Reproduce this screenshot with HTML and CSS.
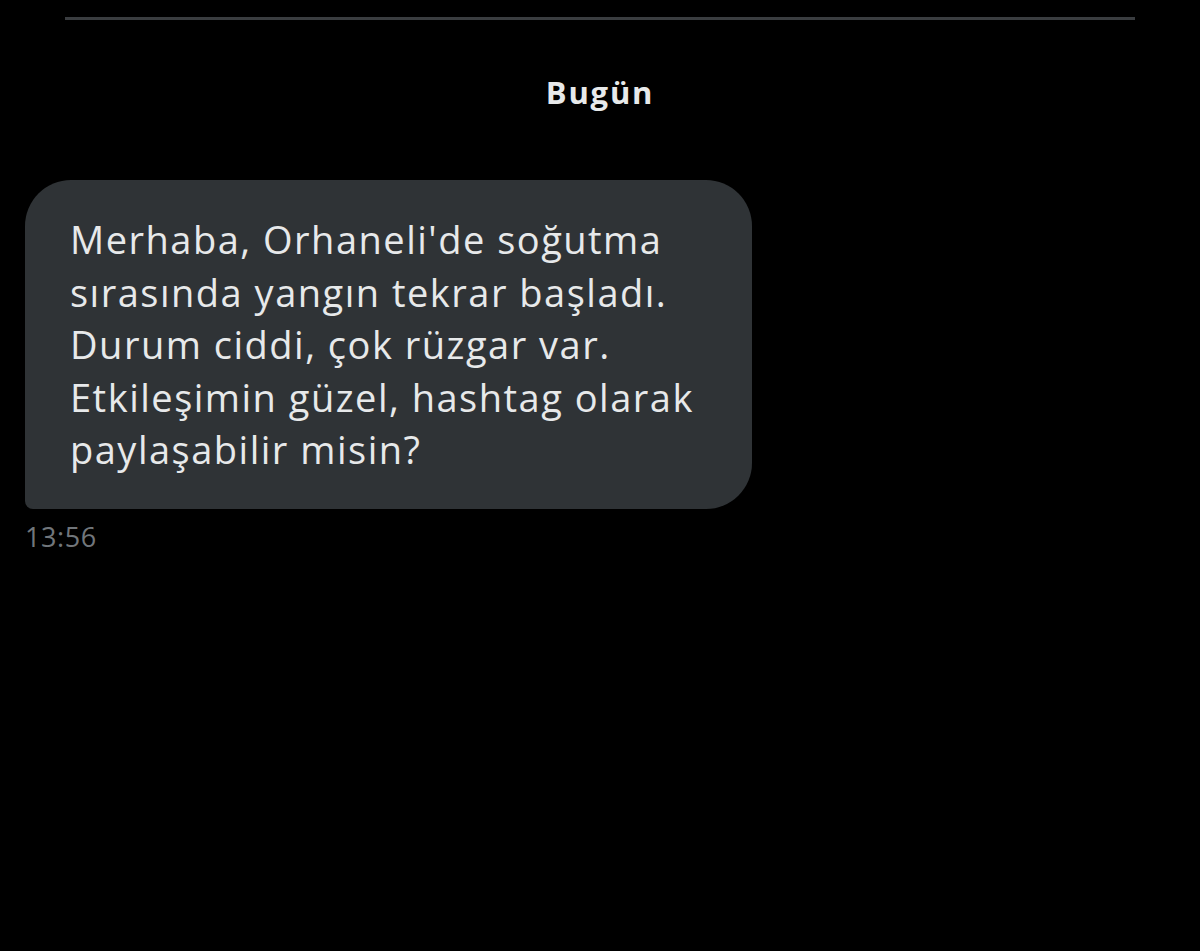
FILE: index.html
```html
<!DOCTYPE html>
<html lang="tr">
<head>
<meta charset="utf-8">
<link rel="stylesheet" href="styles.css">
</head>
<body>
<div class="screen">
  <div class="divider"></div>
  <div class="day">Bugün</div>
  <div class="message">
    <div class="bubble">Merhaba, Orhaneli'de soğutma<br>sırasında yangın tekrar başladı.<br>Durum ciddi, çok rüzgar var.<br>Etkileşimin güzel, hashtag olarak<br>paylaşabilir misin?</div>
    <div class="time">13:56</div>
  </div>
</div>
</body>
</html>
```
FILE: styles.css
```css
html, body {
  margin: 0;
  padding: 0;
  background: #000;
}
.screen {
  width: 1200px;
  height: 951px;
  background: #000;
  padding-top: 17px;
  box-sizing: border-box;
}
.divider {
  margin: 0 65px;
  height: 3px;
  background: #3a3d40;
}
.day {
  margin-top: 50px;
  text-align: center;
  font-family: "Open Sans", "Noto Sans", sans-serif;
  font-weight: 700;
  font-size: 31px;
  letter-spacing: 1.8px;
  line-height: 44px;
  color: #e7e9ea;
}
.message {
  margin-top: 66px;
  margin-left: 25px;
  display: flex;
  flex-direction: column;
  align-items: flex-start;
}
.bubble {
  width: 727px;
  box-sizing: border-box;
  padding: 33px 20px 33px 45px;
  background: #2f3336;
  border-radius: 46px 46px 46px 8px;
  font-family: "Open Sans", "Noto Sans", sans-serif;
  font-size: 38px;
  letter-spacing: 1.5px;
  line-height: 52.5px;
  color: #e7e9ea;
}
.time {
  margin-top: 11px;
  font-family: "Open Sans", "Noto Sans", sans-serif;
  font-size: 27px;
  letter-spacing: 0.6px;
  line-height: 34px;
  color: #71767b;
}
```
